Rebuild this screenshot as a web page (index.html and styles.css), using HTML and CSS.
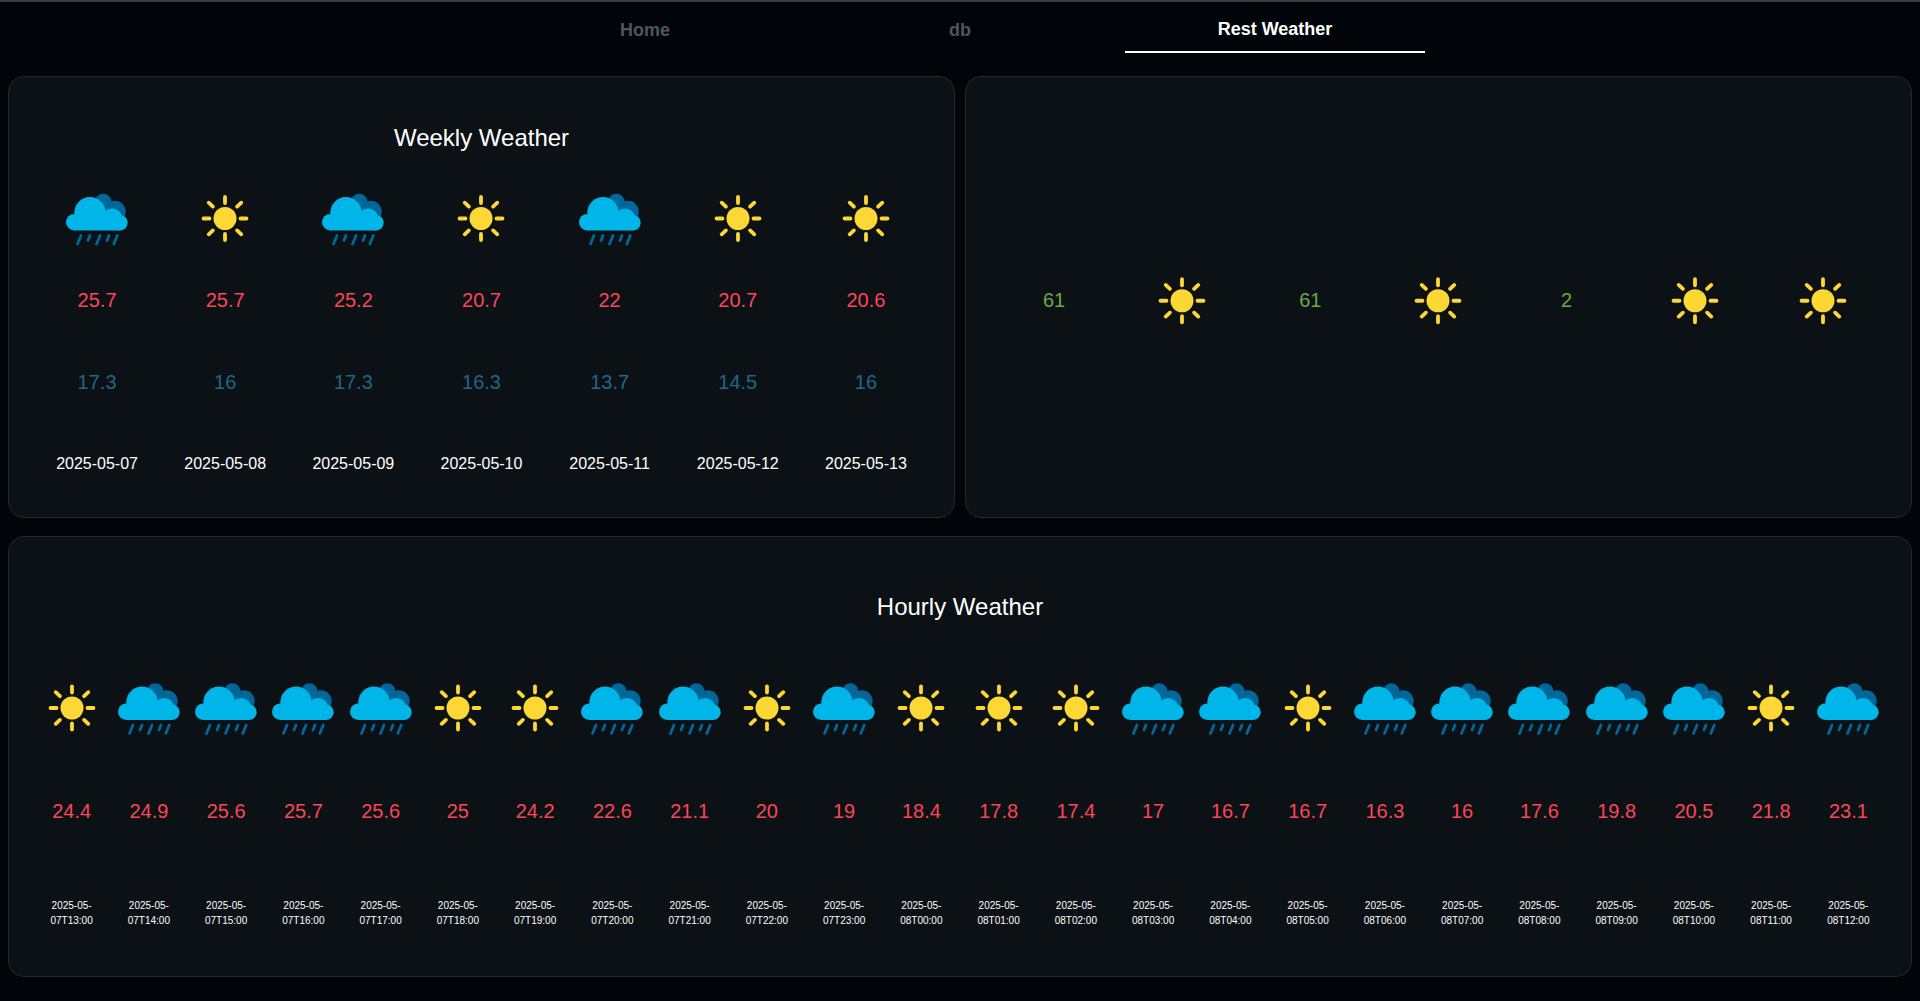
FILE: index.html
```html
<!DOCTYPE html>
<html lang="en">
<head>
  <meta charset="UTF-8" />
  <title>Rest Weather</title>
  <link rel="stylesheet" href="styles.css">
</head>
<body>
  <svg class="sprites" width="0" height="0">
    <symbol id="sun" viewBox="0 0 64 64">
      <circle cx="32" cy="32" r="11.500" fill="#fdd835" />
      <g stroke="#fdd835" stroke-width="3.800" stroke-linecap="round">
        <path d="M32 10.500v6M32 47.500v6M10.500 32h6M47.500 32h6M15.700 16.200l4.200 3.900M44.100 43.900l4.200 3.900M15.700 47.800l4.200-3.900M44.100 20.100l4.200-3.900" />
      </g>
    </symbol>
    <symbol id="rain" viewBox="0 0 64 64">
      <g fill="#01679b">
        <circle cx="38.300" cy="15.700" r="8.400" />
        <circle cx="50" cy="25" r="10.700" />
      </g>
      <g fill="#00b5e8">
        <circle cx="9.300" cy="35.700" r="8.300" />
        <circle cx="25" cy="26.300" r="15.700" />
        <circle cx="47" cy="32.500" r="10.500" />
        <circle cx="55" cy="36.300" r="7.700" />
        <rect x="9.300" y="30" width="45.700" height="14" />
      </g>
      <path d="M16 49l-3.500 8.500M25 49l-2 5M35 49l-3.500 8.500M44 49l-2 5M52.300 49l-3.500 8.500" stroke="#01679b" stroke-width="2.800" stroke-linecap="round" fill="none" />
    </symbol>
  </svg>

  <nav class="tabs">
    <a class="tab">Home</a>
    <a class="tab">db</a>
    <a class="tab active">Rest Weather</a>
  </nav>

  <main class="page">
    <div class="top-row">
      <section class="card weekly">
        <h2>Weekly Weather</h2>
        <div class="days">
          <div class="day"><svg class="icon"><use href="#rain" /></svg><span class="high">25.7</span><span class="low">17.3</span><span class="date">2025-05-07</span></div>
          <div class="day"><svg class="icon"><use href="#sun" /></svg><span class="high">25.7</span><span class="low">16</span><span class="date">2025-05-08</span></div>
          <div class="day"><svg class="icon"><use href="#rain" /></svg><span class="high">25.2</span><span class="low">17.3</span><span class="date">2025-05-09</span></div>
          <div class="day"><svg class="icon"><use href="#sun" /></svg><span class="high">20.7</span><span class="low">16.3</span><span class="date">2025-05-10</span></div>
          <div class="day"><svg class="icon"><use href="#rain" /></svg><span class="high">22</span><span class="low">13.7</span><span class="date">2025-05-11</span></div>
          <div class="day"><svg class="icon"><use href="#sun" /></svg><span class="high">20.7</span><span class="low">14.5</span><span class="date">2025-05-12</span></div>
          <div class="day"><svg class="icon"><use href="#sun" /></svg><span class="high">20.6</span><span class="low">16</span><span class="date">2025-05-13</span></div>
        </div>
      </section>

      <section class="card humidity">
        <div class="days">
          <span class="rain-pct">61</span><svg class="icon"><use href="#sun" /></svg>
          <span class="rain-pct">61</span><svg class="icon"><use href="#sun" /></svg>
          <span class="rain-pct">2</span><svg class="icon"><use href="#sun" /></svg>
          <svg class="icon"><use href="#sun" /></svg>
        </div>
      </section>
    </div>

    <section class="card hourly">
      <h2>Hourly Weather</h2>
      <div class="hours">
        <div class="hour"><svg class="icon"><use href="#sun" /></svg><span class="high">24.4</span><span class="time">2025-05-07T13:00</span></div>
        <div class="hour"><svg class="icon"><use href="#rain" /></svg><span class="high">24.9</span><span class="time">2025-05-07T14:00</span></div>
        <div class="hour"><svg class="icon"><use href="#rain" /></svg><span class="high">25.6</span><span class="time">2025-05-07T15:00</span></div>
        <div class="hour"><svg class="icon"><use href="#rain" /></svg><span class="high">25.7</span><span class="time">2025-05-07T16:00</span></div>
        <div class="hour"><svg class="icon"><use href="#rain" /></svg><span class="high">25.6</span><span class="time">2025-05-07T17:00</span></div>
        <div class="hour"><svg class="icon"><use href="#sun" /></svg><span class="high">25</span><span class="time">2025-05-07T18:00</span></div>
        <div class="hour"><svg class="icon"><use href="#sun" /></svg><span class="high">24.2</span><span class="time">2025-05-07T19:00</span></div>
        <div class="hour"><svg class="icon"><use href="#rain" /></svg><span class="high">22.6</span><span class="time">2025-05-07T20:00</span></div>
        <div class="hour"><svg class="icon"><use href="#rain" /></svg><span class="high">21.1</span><span class="time">2025-05-07T21:00</span></div>
        <div class="hour"><svg class="icon"><use href="#sun" /></svg><span class="high">20</span><span class="time">2025-05-07T22:00</span></div>
        <div class="hour"><svg class="icon"><use href="#rain" /></svg><span class="high">19</span><span class="time">2025-05-07T23:00</span></div>
        <div class="hour"><svg class="icon"><use href="#sun" /></svg><span class="high">18.4</span><span class="time">2025-05-08T00:00</span></div>
        <div class="hour"><svg class="icon"><use href="#sun" /></svg><span class="high">17.8</span><span class="time">2025-05-08T01:00</span></div>
        <div class="hour"><svg class="icon"><use href="#sun" /></svg><span class="high">17.4</span><span class="time">2025-05-08T02:00</span></div>
        <div class="hour"><svg class="icon"><use href="#rain" /></svg><span class="high">17</span><span class="time">2025-05-08T03:00</span></div>
        <div class="hour"><svg class="icon"><use href="#rain" /></svg><span class="high">16.7</span><span class="time">2025-05-08T04:00</span></div>
        <div class="hour"><svg class="icon"><use href="#sun" /></svg><span class="high">16.7</span><span class="time">2025-05-08T05:00</span></div>
        <div class="hour"><svg class="icon"><use href="#rain" /></svg><span class="high">16.3</span><span class="time">2025-05-08T06:00</span></div>
        <div class="hour"><svg class="icon"><use href="#rain" /></svg><span class="high">16</span><span class="time">2025-05-08T07:00</span></div>
        <div class="hour"><svg class="icon"><use href="#rain" /></svg><span class="high">17.6</span><span class="time">2025-05-08T08:00</span></div>
        <div class="hour"><svg class="icon"><use href="#rain" /></svg><span class="high">19.8</span><span class="time">2025-05-08T09:00</span></div>
        <div class="hour"><svg class="icon"><use href="#rain" /></svg><span class="high">20.5</span><span class="time">2025-05-08T10:00</span></div>
        <div class="hour"><svg class="icon"><use href="#sun" /></svg><span class="high">21.8</span><span class="time">2025-05-08T11:00</span></div>
        <div class="hour"><svg class="icon"><use href="#rain" /></svg><span class="high">23.1</span><span class="time">2025-05-08T12:00</span></div>
      </div>
    </section>
  </main>
</body>
</html>
```

FILE: styles.css
```css
* {
  box-sizing: border-box;
}

body {
  margin: 0;
  height: 1001px;
  overflow: hidden;
  background-color: #010409;
  border-top: 2px solid #3b3b41;
  color: white;
  font-family: "Liberation Sans", Arial, sans-serif;
}

.sprites {
  position: absolute;
}

.tabs {
  display: flex;
  justify-content: center;
  gap: 15px;
  height: 74px;
}

.tab {
  width: 300px;
  height: 51px;
  padding-top: 18px;
  text-align: center;
  font-size: 18px;
  font-weight: bold;
  line-height: 20px;
  color: #4a5663;
}

.tab.active {
  padding-top: 17px;
  color: white;
  border-bottom: 2px solid white;
}

.page {
  padding: 0 8px;
}

.top-row {
  display: grid;
  grid-template-columns: 1fr 1fr;
  gap: 10px;
  margin-bottom: 18px;
}

.card {
  height: 442px;
  padding: 0 24px;
  background-color: #0c1115;
  border: 1px solid #25292f;
  border-radius: 16px;
}

.hourly {
  height: 441px;
}

.card h2 {
  margin: 0;
  text-align: center;
  font-size: 24px;
  font-weight: normal;
  line-height: 28px;
}

.weekly h2 {
  padding-top: 47px;
  height: 100px;
}

.hourly h2 {
  padding-top: 56px;
  height: 120px;
}

.days {
  display: grid;
  grid-template-columns: repeat(7, 1fr);
}

.day,
.hour {
  display: flex;
  flex-direction: column;
  align-items: center;
  text-align: center;
}

.day > *,
.humidity .days > * {
  height: 81.5px;
  line-height: 81.5px;
}

.hours {
  display: grid;
  grid-template-columns: repeat(24, 1fr);
}

.hour > * {
  height: 102px;
  line-height: 102px;
}

.icon {
  width: 64px;
  flex: none;
}

.day .icon {
  height: 83px;
  padding: 9.500px 0 9.500px;
}

.hour .icon {
  height: 103px;
  padding: 19px 0 20px;
}

.humidity .days {
  padding-top: 183px;
}

.humidity .days > .icon {
  padding: 8.750px 0;
  justify-self: center;
}

.high {
  font-size: 20px;
  color: #fb4655;
}

.low {
  font-size: 20px;
  color: #21668a;
}

.rain-pct {
  text-align: center;
  font-size: 20px;
  color: #67ab45;
}

.date {
  font-size: 16px;
}

.hour .time {
  display: flex;
  align-items: center;
  font-size: 10px;
  line-height: 15px;
  padding: 0 6px;
}
```
